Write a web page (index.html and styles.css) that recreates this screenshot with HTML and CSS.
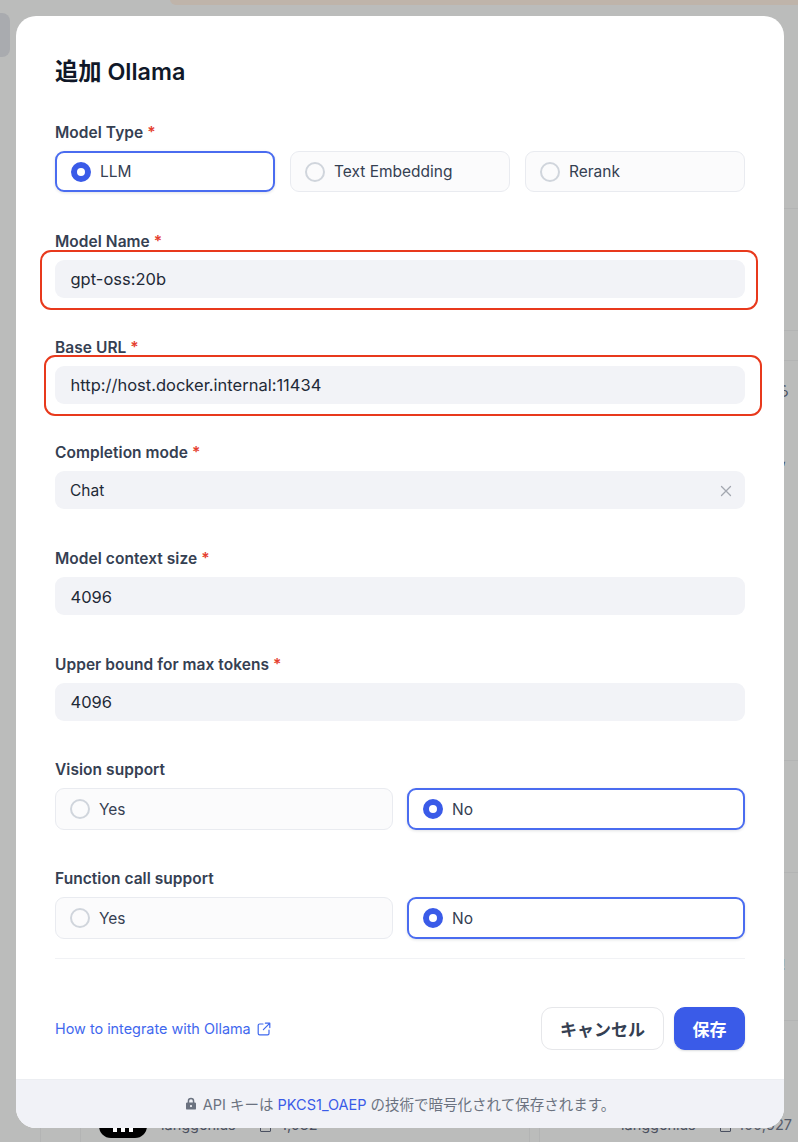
FILE: index.html
```html
<!DOCTYPE html>
<html lang="ja">
<head>
    <meta name="viewport" content="width=device-width, initial-scale=1.0">
    <title>追加 Ollama</title>
    <link rel="stylesheet" href="styles.css">
</head>
<body>

    <!-- page behind the dialog -->
    <div class="backdrop">
        <div class="bg-pill"></div>
        <div class="bg-banner"></div>
        <div class="bg-line" style="top: 208px"></div>
        <div class="bg-line" style="top: 330px"></div>
        <div class="bg-line" style="top: 360px"></div>
        <div class="bg-line" style="top: 760px"></div>
        <div class="bg-line" style="top: 872px"></div>
        <div class="bg-line" style="top: 1020px"></div>
        <div class="bg-vline" style="left: 40px"></div>
        <div class="bg-vline" style="left: 80px"></div>
        <div class="bg-vline" style="left: 529px"></div>
        <div class="bg-vline" style="left: 539px"></div>
        <div class="bg-text bg-glyph-a">ら</div>
        <div class="bg-text bg-glyph-b">,</div>
        <div class="bg-text bg-glyph-c">!</div>
        <div class="bg-logo"><span></span><span></span><span></span></div>
        <div class="bg-text bg-owner-a">langgenius</div>
        <div class="bg-box bg-box-a"></div>
        <div class="bg-text bg-count-a">1,082</div>
        <div class="bg-text bg-owner-b">langgenius</div>
        <div class="bg-box bg-box-b"></div>
        <div class="bg-text bg-count-b">100,927</div>
    </div>

    <div class="modal">
        <div class="modal-body">
            <h1 class="title">追加 Ollama</h1>

            <div class="field">
                <div class="label">Model Type <span class="req">*</span></div>
                <div class="options">
                    <div class="option selected"><span class="radio"></span>LLM</div>
                    <div class="option"><span class="radio"></span>Text Embedding</div>
                    <div class="option"><span class="radio"></span>Rerank</div>
                </div>
            </div>

            <div class="field">
                <div class="label">Model Name <span class="req">*</span></div>
                <div class="input">gpt-oss:20b</div>
            </div>

            <div class="field">
                <div class="label">Base URL <span class="req">*</span></div>
                <div class="input">http://host.docker.internal:11434</div>
            </div>

            <div class="field">
                <div class="label">Completion mode <span class="req">*</span></div>
                <div class="input select">
                    Chat
                    <svg class="clear" width="12" height="12" viewBox="0 0 12 12" fill="none" stroke="#a3a7b0" stroke-width="1.3" stroke-linecap="round"><path d="M1.5 1.5l9 9M10.5 1.5l-9 9"/></svg>
                </div>
            </div>

            <div class="field">
                <div class="label">Model context size <span class="req">*</span></div>
                <div class="input">4096</div>
            </div>

            <div class="field">
                <div class="label">Upper bound for max tokens <span class="req">*</span></div>
                <div class="input">4096</div>
            </div>

            <div class="field tight">
                <div class="label">Vision support</div>
                <div class="options two">
                    <div class="option"><span class="radio"></span>Yes</div>
                    <div class="option selected"><span class="radio"></span>No</div>
                </div>
            </div>

            <div class="field last">
                <div class="label">Function call support</div>
                <div class="options two">
                    <div class="option"><span class="radio"></span>Yes</div>
                    <div class="option selected"><span class="radio"></span>No</div>
                </div>
            </div>

            <div class="divider"></div>

            <div class="actions">
                <a class="help" href="#">How to integrate with Ollama
                    <svg width="14" height="14" viewBox="0 0 14 14" fill="none" stroke="#3f68ee" stroke-width="1.2" stroke-linecap="round" stroke-linejoin="round"><path d="M6 2H2.6A1.4 1.4 0 0 0 1.2 3.4v8A1.4 1.4 0 0 0 2.6 12.8h8a1.4 1.4 0 0 0 1.4-1.4V8.2"/><path d="M8.4 1.2h4.4v4.4M12.6 1.4L6.4 7.6"/></svg>
                </a>
                <div class="buttons">
                    <button class="btn">キャンセル</button>
                    <button class="btn primary">保存</button>
                </div>
            </div>
        </div>

        <div class="modal-foot">
            <svg width="12" height="13" viewBox="0 0 12 13" fill="#6b7280"><path d="M6 .8a3.3 3.3 0 0 0-3.3 3.3v1.3H2.2A1.2 1.2 0 0 0 1 6.6v4.8a1.2 1.2 0 0 0 1.2 1.2h7.6a1.2 1.2 0 0 0 1.2-1.2V6.6a1.2 1.2 0 0 0-1.2-1.2h-.5V4.1A3.3 3.3 0 0 0 6 .8zm0 1.5a1.8 1.8 0 0 1 1.8 1.8v1.3H4.2V4.1A1.8 1.8 0 0 1 6 2.300zM6 8a1.100 1.100 0 1 1 0 2.200A1.100 1.100 0 0 1 6 8z"/></svg>
            <span>API キーは <a href="#">PKCS1_OAEP</a> の技術で暗号化されて保存されます。</span>
        </div>
    </div>

    <!-- red marks drawn over the screenshot -->
    <div class="mark mark-name"></div>
    <div class="mark mark-url"></div>

</body>
</html>
```

FILE: styles.css
```css
html, body {
    margin: 0;
    height: 1142px;
    overflow: hidden;
    background: #bbbcbb;
    font-family: Inter, "Noto Sans CJK JP", sans-serif;
    color: #354052;
}

.backdrop {
    position: absolute;
    inset: 0;
    overflow: hidden;
}

.bg-pill {
    position: absolute;
    top: 13px;
    left: -20px;
    width: 30px;
    height: 44px;
    background: #a9abaf;
    border-radius: 8px;
}

.bg-banner {
    position: absolute;
    top: -10px;
    left: 170px;
    right: -10px;
    height: 15px;
    background: #bfb4aa;
    border-radius: 6px;
}

.bg-line {
    position: absolute;
    left: 784px;
    right: 0;
    height: 1px;
    background: #b3b4b4;
}

.bg-vline {
    position: absolute;
    top: 1128px;
    bottom: 0;
    width: 1px;
    background: #b3b4b4;
}

.bg-text {
    position: absolute;
    font-size: 14.5px;
    line-height: 20px;
    color: #4a5060;
}

.bg-glyph-a { top: 381px; left: 775px; font-size: 15px; }
.bg-glyph-b { top: 448px; left: 782px; font-size: 15px; }
.bg-glyph-c { top: 955px; left: 781px; font-size: 15px; }

.bg-logo {
    position: absolute;
    top: 1100px;
    left: 99px;
    width: 48px;
    height: 38px;
    display: flex;
    align-items: flex-end;
    justify-content: center;
    gap: 4px;
    padding-bottom: 6px;
    box-sizing: border-box;
    background: #000;
    border-radius: 12px;
}

.bg-logo span {
    width: 4px;
    height: 10px;
    background: #fff;
}

.bg-box {
    position: absolute;
    top: 1122px;
    width: 9px;
    height: 8px;
    border: 1.5px solid #4a5060;
    border-radius: 1px;
}

.bg-box-a { left: 260px; }
.bg-box-b { left: 720px; }

.bg-owner-a { top: 1115px; left: 161px; }
.bg-count-a { top: 1115px; left: 281px; }
.bg-owner-b { top: 1115px; left: 621px; }
.bg-count-b { top: 1115px; left: 738px; color: #555b69; }

.modal {
    position: relative;
    margin: 16px 0 0 16px;
    width: 768px;
    height: 1112px;
    background: #fff;
    border-radius: 20px;
    overflow: hidden;
    display: flex;
    flex-direction: column;
}

.modal-body {
    flex: 1;
    padding: 40px 39px 0 39px;
}

.title {
    margin: 0 0 35.3px;
    font-size: 23.3px;
    line-height: 32px;
    font-weight: 600;
    color: #101828;
}

.field {
    margin-bottom: 39.7px;
}

.field.tight {
    margin-bottom: 38.7px;
}

.field.last {
    margin-bottom: 19px;
}

.label {
    height: 20px;
    margin-bottom: 8px;
    font-size: 15.5px;
    line-height: 20px;
    font-weight: 600;
    letter-spacing: 0.05px;
    color: #354052;
}

.req {
    color: #e5402f;
}

.options {
    display: grid;
    grid-template-columns: 220px 220px 220px;
    gap: 15px;
}

.options.two {
    grid-template-columns: 1fr 1fr;
    gap: 14px;
}

.option {
    box-sizing: border-box;
    height: 41px;
    display: flex;
    align-items: center;
    padding-left: 14px;
    gap: 9px;
    font-size: 15.5px;
    color: #354052;
    background: #fbfbfc;
    border: 1px solid #e9ebf0;
    border-radius: 9px;
}

.two .option {
    height: 42px;
}

.option.selected {
    background: #fff;
    border: 2px solid #4a6cf0;
    padding-left: 14px;
    box-shadow: 0 1px 3px rgba(16, 24, 40, 0.12);
}

.radio {
    box-sizing: border-box;
    width: 20px;
    height: 20px;
    border: 2px solid #d0d5dc;
    border-radius: 50%;
}

.selected .radio {
    border: 6px solid #3a5be8;
    background: #fff;
}

.input {
    box-sizing: border-box;
    height: 38px;
    display: flex;
    align-items: center;
    justify-content: space-between;
    padding: 1px 13px 0 15.5px;
    font-size: 16.5px;
    color: #1f2a37;
    background: #f2f3f7;
    border-radius: 9px;
}

.input.select {
    padding-left: 15px;
    font-size: 15.5px;
}

.divider {
    height: 1px;
    background: #f1f2f5;
    margin-bottom: 48px;
}

.actions {
    display: flex;
    align-items: center;
    justify-content: space-between;
}

.help {
    display: flex;
    align-items: center;
    gap: 6px;
    font-size: 14.4px;
    color: #3f68ee;
    text-decoration: none;
}

.buttons {
    display: flex;
    gap: 10px;
}

.btn {
    box-sizing: border-box;
    height: 43px;
    width: 123px;
    padding: 0 0 1px;
    font-family: inherit;
    font-size: 17px;
    font-weight: 700;
    color: #354052;
    background: #fff;
    border: 1px solid #e6e7ea;
    border-radius: 11px;
}

.btn.primary {
    width: 71px;
    color: #fff;
    background: #3a5be8;
    border-color: #3a5be8;
    box-shadow: 0 1px 2px rgba(16, 24, 40, 0.15);
}

.modal-foot {
    height: 49px;
    display: flex;
    align-items: center;
    justify-content: center;
    gap: 6px;
    padding-bottom: 1px;
    font-size: 14.5px;
    color: #6b7280;
    background: #f1f2f7;
    border-top: 1px solid #eceef2;
    box-sizing: border-box;
}

.modal-foot a {
    color: #3a5be8;
    text-decoration: none;
}

.mark {
    position: absolute;
    box-sizing: border-box;
    border: 2px solid #e8391c;
    border-radius: 11px;
}

.mark-name {
    top: 250px;
    left: 40px;
    width: 718px;
    height: 60px;
}

.mark-url {
    top: 355px;
    left: 44px;
    width: 718px;
    height: 61px;
}
```
